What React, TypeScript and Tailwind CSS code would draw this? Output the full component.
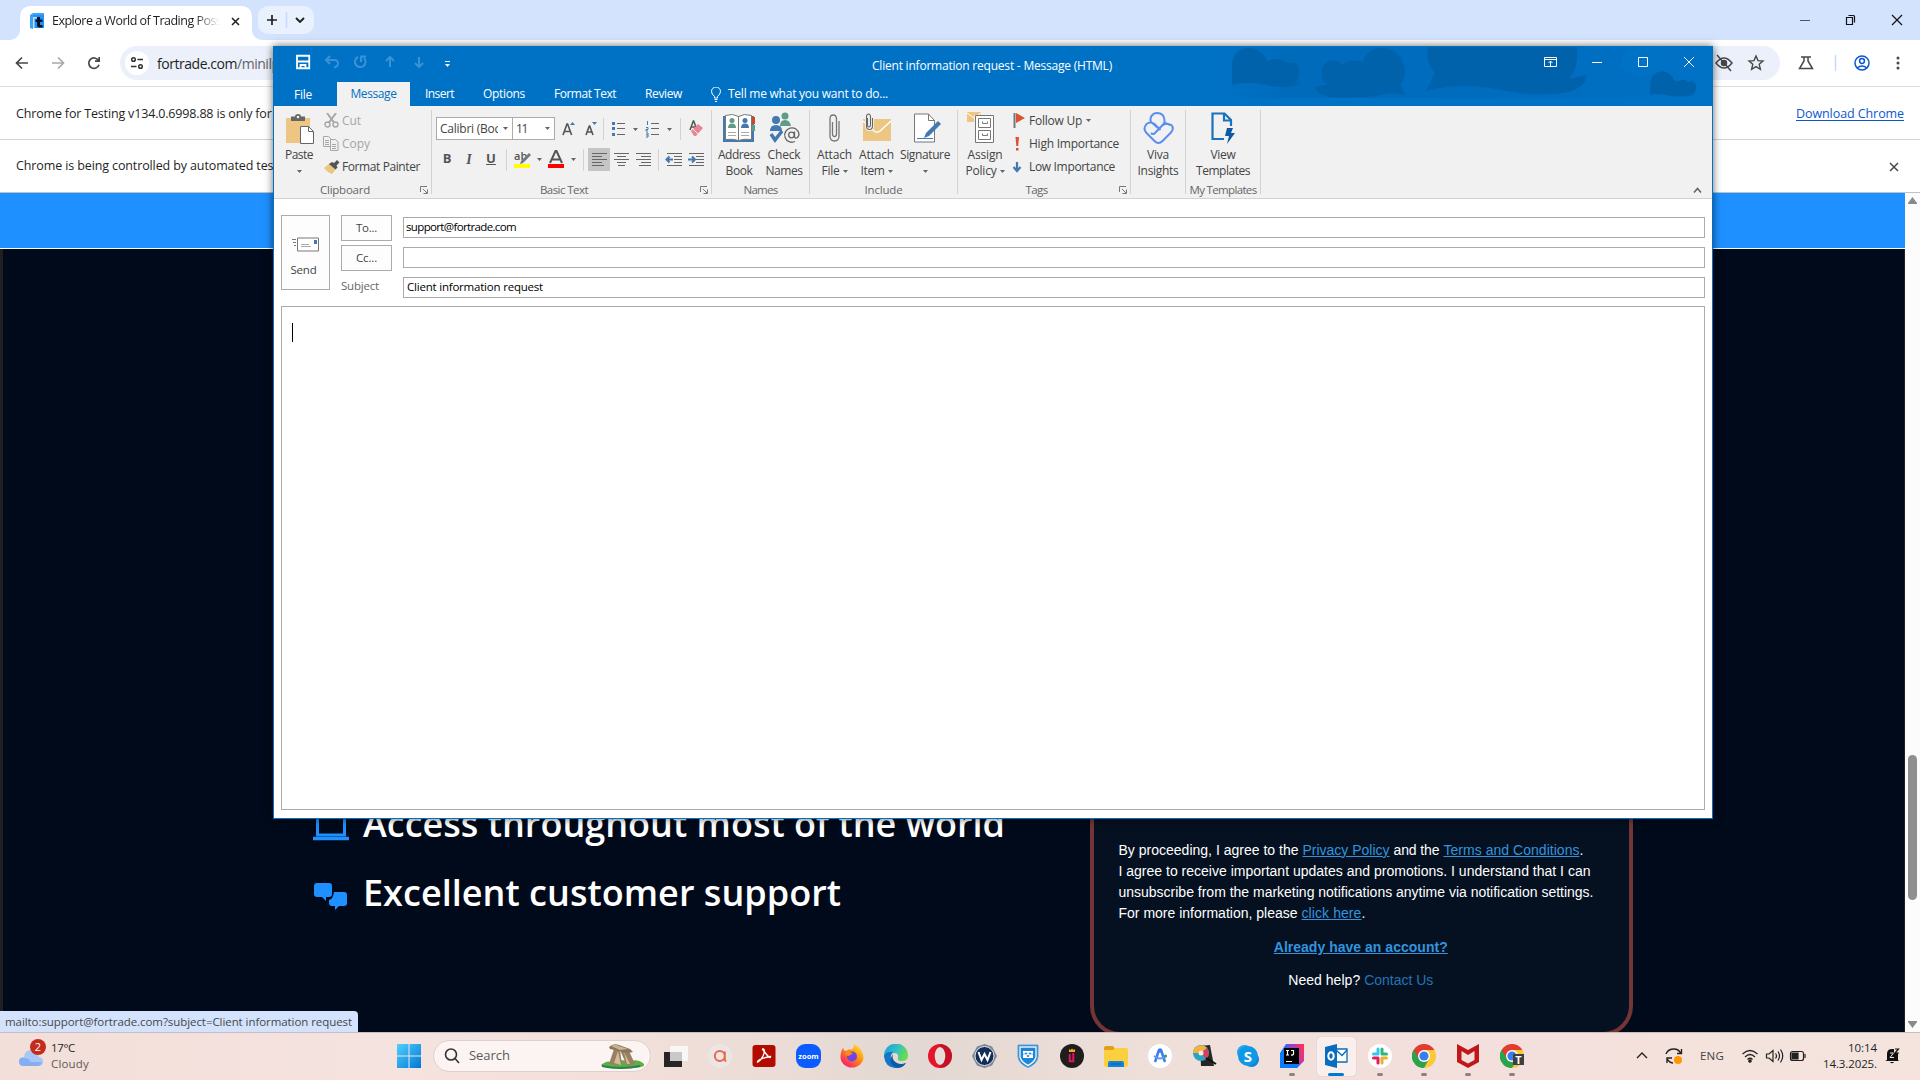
import { useLayoutEffect, useRef, type ReactNode } from 'react';

/** Text on one line whose letter spacing is adjusted so that it fills `w` pixels. */
function Fit({ w, className = '', children }: { w: number; className?: string; children: string }) {
  const ref = useRef<HTMLSpanElement>(null);
  useLayoutEffect(() => {
    const el = ref.current;
    if (!el) return;
    el.style.letterSpacing = '0px';
    const natural = el.getBoundingClientRect().width;
    el.style.letterSpacing = `${(w - natural) / children.length}px`;
  }, [w, children]);
  return (
    <span ref={ref} className={`inline-block shrink-0 whitespace-nowrap ${className}`}>
      {children}
    </span>
  );
}

const Caret = ({ className = 'text-[#666]' }: { className?: string }) => (
  <svg width="5" height="3" viewBox="0 0 5 3" className={`shrink-0 ${className}`}>
    <path d="M0 0h5L2.5 3z" fill="currentColor" />
  </svg>
);

const Launcher = () => (
  <svg width="8" height="8" viewBox="0 0 8 8" className="text-[#777]">
    <path d="M.5 6V.5H7M3 3l4 4M7.5 3.5v4h-4" fill="none" stroke="currentColor" />
  </svg>
);

/* ---------------------------------------------------------------- Chrome */

function TabStrip() {
  return (
    <div className="flex h-10 items-end bg-[#d3e3fd]">
      <div className="ml-2.5 h-2.5 w-2.5 bg-white">
        <div className="h-full w-full rounded-br-[10px] bg-[#d3e3fd]" />
      </div>
      <div className="flex h-[34px] w-[232px] items-center rounded-t-[10px] bg-white pb-1 pl-2.5">
        <svg width="14" height="16" viewBox="0 0 14 16">
          <path d="M2 1h12v14H2z" fill="#1e90ff" />
          <path d="M0 2 3 0h11v2H3v14l-3-1z" fill="#38a5f5" />
          <path d="M3 4h4v1.500H4.500V15H3z" fill="#bfe0ff" />
          <path d="M7 4h3v2.500h2.500V9H10v3h2.500v2.500H9Q7 14 7 12V9H5.500V6.500H7z" fill="#06121f" />
        </svg>
        <div className="ml-2 w-[168px] overflow-hidden text-[12.500px] text-[#1f1f1f] [mask-image:linear-gradient(to_right,#000_85%,transparent)]">
          <Fit w={172}>Explore a World of Trading Possi</Fit>
        </div>
        <svg width="9" height="9" viewBox="0 0 9 9" className="ml-[11px]">
          <path d="m1 1 7 7M8 1 1 8" stroke="#1f1f1f" strokeWidth="1.500" />
        </svg>
      </div>
      <div className="h-2.5 w-2.5 bg-white">
        <div className="h-full w-full rounded-bl-[10px] bg-[#d3e3fd]" />
      </div>
      <div className="-ml-1 mb-1.5 flex h-7 w-14 items-center rounded-[10px] bg-[#e9f0fe]">
        <svg width="56" height="28" viewBox="0 0 56 28" fill="none" stroke="#1f1f1f" strokeWidth="1.700">
          <path d="M14 9v10M9 14h10" />
          <path d="M28.500 6v16" stroke="#c5dafc" strokeWidth="1.500" />
          <path d="m38 12 4 4 4-4" strokeWidth="1.900" />
        </svg>
      </div>
      <svg width="120" height="40" viewBox="0 0 120 40" className="ml-auto" fill="none" stroke="#111">
        <path d="M0 20.500h10" stroke="#555" />
        <path d="M46.500 17.500h6v7h-6zM48.500 15.500h5q1 0 1 1v6" strokeWidth="1.200" />
        <path d="m92 15 10 10M102 15 92 25" strokeWidth="1.200" />
      </svg>
    </div>
  );
}

function Toolbar() {
  return (
    <div className="flex h-[47px] items-center border-b border-[#dcdfe4] bg-white">
      <svg width="120" height="34" viewBox="0 0 120 34" fill="none" stroke="#474747" strokeWidth="1.700">
        <path d="M28 17H17M22 11.500 16.500 17l5.500 5.500" />
        <path d="M52 17h11M58 11.500l5.500 5.500-5.500 5.500" stroke="#a9a9a9" />
        <path d="M98.500 14.500a5.200 5.200 0 1 0 .5 4.200M99.200 11v4.200H95" />
      </svg>
      <div className="flex h-[34px] w-[1660px] items-center rounded-full bg-[#ebf0fa] pl-[5px]">
        <svg width="24" height="24" viewBox="0 0 24 24" fill="none" stroke="#303030" strokeWidth="1.500">
          <circle cx="12" cy="12" r="12" fill="#fff" stroke="none" />
          <circle cx="8.500" cy="8.500" r="1.800" />
          <path d="M12.500 8.500H18M6 15.500h5.500" />
          <circle cx="15.500" cy="15.500" r="1.800" />
        </svg>
        <div className="ml-2 flex text-[14px] text-[#1f1f1f]">
          <Fit w={80}>fortrade.com</Fit>
          <Fit w={69} className="text-[#5f6368]">/minilps/en</Fit>
        </div>
        <svg width="20" height="20" viewBox="0 0 20 20" className="ml-auto" fill="none" stroke="#474747" strokeWidth="1.500">
          <path d="M2 10q8-10 16 0-8 10-16 0z" />
          <circle cx="10" cy="10" r="2.500" fill="#474747" />
          <path d="m3 2 14 16" />
        </svg>
        <svg width="20" height="20" viewBox="0 0 20 20" className="ml-3 mr-3.5" fill="none" stroke="#474747" strokeWidth="1.400">
          <path d="m10 3 2 4.600 5 .4-3.800 3.300 1.200 5L10 13.600l-4.400 2.700 1.200-5L3 8l5-.4z" />
        </svg>
      </div>
      <svg width="140" height="34" viewBox="0 0 140 34" fill="none" stroke="#474747" strokeWidth="1.500">
        <path d="M21 11h10M24 11v4l-4.500 7.500h13L28 15v-4" />
        <path d="M55.500 9v16" stroke="#c5dafc" />
        <g stroke="#0b57d0">
          <circle cx="82" cy="17" r="7" />
          <circle cx="82" cy="15" r="2.400" />
          <path d="M77 22q5-4 10 0" />
        </g>
        <g fill="#474747" stroke="none">
          <circle cx="118" cy="12" r="1.500" />
          <circle cx="118" cy="17" r="1.500" />
          <circle cx="118" cy="22" r="1.500" />
        </g>
      </svg>
    </div>
  );
}

function InfoBars() {
  return (
    <>
      <div className="flex h-[53px] items-center justify-between border-b border-[#d2d2d2] bg-white pl-4 pr-4 pt-0.5 text-[12.500px] text-[#1f1f1f]">
        <Fit w={366}>Chrome for Testing v134.0.6998.88 is only for automated testing.</Fit>
        <Fit w={108} className="text-[#0b57d0] underline underline-offset-2">Download Chrome</Fit>
      </div>
      <div className="flex h-[53px] items-center justify-between border-b border-[#bfc3c8] bg-white pl-4 pr-[21px] pt-px text-[12.500px] text-[#1f1f1f]">
        <Fit w={318}>Chrome is being controlled by automated test software.</Fit>
        <svg width="10" height="10" viewBox="0 0 10 10">
          <path d="m1 1 8 8M9 1 1 9" stroke="#474747" strokeWidth="1.500" />
        </svg>
      </div>
    </>
  );
}

function WebPage() {
  return (
    <div className="flex h-[839px] w-full">
      <div className="flex grow flex-col">
        <div className="h-[56px] border-b border-white bg-[#1e90ff]" />
        <div className="flex grow overflow-hidden border-l-[3px] border-r border-[#202020] bg-[#000a1a]">
          <div className="flex w-[1087px] flex-col pl-[310px] pt-[541px] font-['Open_Sans'] text-[36px] font-semibold text-white">
            <div className="flex h-[69px] items-center">
              <svg width="36" height="30" viewBox="0 0 36 30" className="mt-1" fill="none" stroke="#1e90ff">
                <path d="M4.500 24V3h27v21z" strokeWidth="3" />
                <path d="M0 27.500h36" strokeWidth="3.500" />
              </svg>
              <Fit w={642} className="ml-[14px]">Access throughout most of the world</Fit>
            </div>
            <div className="flex h-[69px] items-center">
              <svg width="36" height="30" viewBox="0 0 36 30" className="mt-2" fill="#1e90ff">
                <path d="M4 1h12q3 0 3 3v8q0 3-3 3h-3v4l-4-4H4q-3 0-3-3V4q0-3 3-3z" />
                <path d="M21 10h10q3 0 3 3v8q0 3-3 3h-5l-4 4v-4h-3q-3 0-3-3v-3q4-1 5-8z" />
              </svg>
              <Fit w={478} className="ml-[14px]">Excellent customer support</Fit>
            </div>
          </div>
          <div className="mt-[500px] flex h-[287px] w-[543px] shrink-0 flex-col rounded-b-[30px] border-4 border-t-0 border-[#733535] bg-[#051120] pl-[24.500px] pt-[91px] font-['Liberation_Sans'] text-[14px] leading-[21px] text-white">
            <div className="flex">
              <Fit w={180}>By proceeding, I agree to the</Fit>
              <Fit w={87} className="ml-1 text-[#3294df] underline">Privacy Policy</Fit>
              <Fit w={46} className="ml-1">and the</Fit>
              <Fit w={136} className="ml-1 text-[#3294df] underline">Terms and Conditions</Fit>
              <span>.</span>
            </div>
            <Fit w={472} className="self-start">I agree to receive important updates and promotions. I understand that I can</Fit>
            <Fit w={475} className="self-start">unsubscribe from the marketing notifications anytime via notification settings.</Fit>
            <div className="flex">
              <Fit w={179}>For more information, please</Fit>
              <Fit w={60} className="ml-1 text-[#3294df] underline">click here</Fit>
              <span>.</span>
            </div>
            <div className="mt-[13px] flex justify-center pr-[26px] font-bold text-[#3294df]">
              <Fit w={174} className="underline">Already have an account?</Fit>
            </div>
            <div className="mt-3 flex justify-center gap-1 pr-[26px]">
              <Fit w={72}>Need help?</Fit>
              <Fit w={69} className="text-[#2474b5]">Contact Us</Fit>
            </div>
          </div>
        </div>
      </div>
      <div className="flex w-[15px] flex-col items-center bg-[#fcfcfc]">
        <svg width="9" height="7" viewBox="0 0 9 7" className="mt-1">
          <path d="M4.500 0 9 6v1H0V6z" fill="#8a8a8a" />
        </svg>
        <div className="mt-[551px] h-[145px] w-[9px] rounded-full bg-[#8f8f8f]" />
        <svg width="9" height="7" viewBox="0 0 9 7" className="mb-1 mt-auto">
          <path d="M4.500 7 9 1V0H0v1z" fill="#8a8a8a" />
        </svg>
      </div>
    </div>
  );
}

/* --------------------------------------------------------------- Outlook */

function TitleBar() {
  return (
    <div className="relative h-9">
      <svg width="497" height="52" viewBox="0 0 497 52" className="absolute right-0 top-[1px]">
        <defs>
          <linearGradient id="fade" x1="0" x2="1">
            <stop offset="0" stopColor="#006bbb" stopOpacity="0" />
            <stop offset=".15" stopColor="#006bbb" />
            <stop offset=".7" stopColor="#006dc0" />
            <stop offset="1" stopColor="#0072c6" />
          </linearGradient>
        </defs>
        <path d="M0 0h497v51H0z" fill="url(#fade)" />
        <path d="M405 20q2-20 16-20h20q14 8 14 28H418z" fill="#0072c6" />
        <g fill="#0062ab">
          <path d="M17 38V17Q19 2 33 1q14 0 19 13 14-5 20 2 14-2 12 10 0 10-8 11l10-2q-6 7-30 4-22-6-39-1z" />
          <path d="M107 30q-2-16 12-17 6 1 8 5 8-7 21-3Q152 1 168 1q20 2 22 23 0 9-5 14l6 10q-10-2-16-2-20 6-60 4-16-4-14-10l12-3q-6-3-6-7z" />
          <path d="M213 0h149q2 20-8 32l18-4q-2 18-36 19-24 2-60-6-35-5-65 3 6-12 9-18-10-10-7-26z" />
          <path d="M435 48q0-18 3-20 12-9 20 3 1 4 6 3 6-3 9 1 8-3 8 5 0 5-4 8h3q-15 3-29 0-10-2-16 0z" />
        </g>
      </svg>
      <div className="relative flex h-full items-center">
        <svg width="200" height="36" viewBox="0 0 200 36" fill="none" stroke="#fff" strokeWidth="1.500">
          <path d="M23 9.750h12.250v12.500H23zM24 15.500h11M26.500 22v-3h5v3" strokeWidth="1.800" />
          <g stroke="#3a92d6" strokeWidth="2">
            <path d="M56 10l-4 4 4 4M52 14h8q4 0 4 3.500 0 3-4 4" />
            <path d="M84 11a5.300 5.300 0 1 0 6 1M87 16v-5.500h5" />
            <path d="M116 21V11M112 15l4-4 4 4" />
            <path d="M145 11v10M141 17l4 4 4-4" />
          </g>
          <path d="M171 15.500h5" strokeWidth="1" />
          <path d="M171 18h5l-2.500 3z" fill="#fff" stroke="none" />
        </svg>
        <div className="flex w-[1036px] justify-center pt-1 text-[12px] text-white">
          <Fit w={240}>Client information request - Message (HTML)</Fit>
        </div>
        <svg width="200" height="36" viewBox="0 0 200 36" fill="none" stroke="#fff" className="ml-px">
          <path d="M33.500 11.500h12v9h-12zM33.500 13.500h12M39.500 20v-5M37.500 17l2-2 2 2" />
          <path d="M81 16.500h10" />
          <path d="M127.500 11.500h9v9h-9z" />
          <path d="m173 11 10 10M183 11l-10 10" />
        </svg>
      </div>
    </div>
  );
}

function RibbonTabs() {
  return (
    <div className="relative flex h-6 items-center text-[12px] text-white">
      <Fit w={18} className="ml-5 mt-0.5">File</Fit>
      <div className="ml-[25px] flex h-full w-[73px] items-center justify-center bg-[#f1f1f1] text-[#0072c6]">
        <Fit w={46}>Message</Fit>
      </div>
      <Fit w={29} className="ml-[15px]">Insert</Fit>
      <Fit w={42} className="ml-[29px]">Options</Fit>
      <Fit w={62} className="ml-[29px]">Format Text</Fit>
      <Fit w={37} className="ml-[29px]">Review</Fit>
      <svg width="10" height="15" viewBox="0 0 10 15" className="ml-[29px]" fill="none" stroke="#fff">
        <path d="M3.500 11V9.500Q.5 7 .5 4.500a4.500 4.500 0 0 1 9 0Q9.500 7 6.500 9.500V11zM3.500 12.500h3M4 14.500h2" />
      </svg>
      <Fit w={160} className="ml-[7px]">Tell me what you want to do...</Fit>
    </div>
  );
}

function Group({ name, nameWidth, className, launcher, children }: {
  name?: string; nameWidth?: number; className: string; launcher?: boolean; children: ReactNode;
}) {
  return (
    <div className={`flex h-[84px] flex-col border-r border-[#d2d2d2] ${className}`}>
      <div className="-mt-px flex h-[75px] shrink-0">{children}</div>
      <div className="flex h-3 shrink-0 items-center text-[11.500px] text-[#666]">
        <div className={`flex grow justify-center ${launcher ? 'pr-1' : ''}`}>
          {name && nameWidth ? <Fit w={nameWidth}>{name}</Fit> : null}
        </div>
        {launcher ? <div className="pr-[3px]"><Launcher /></div> : null}
      </div>
    </div>
  );
}

function BigButton({ icon, lines, widths, className, caret }: {
  icon: ReactNode; lines: string[]; widths: number[]; className: string; caret?: boolean;
}) {
  return (
    <div className={`flex shrink-0 flex-col items-center text-[12px] leading-4 text-[#444] ${className}`}>
      <div className="flex h-9 items-center justify-center pt-px">{icon}</div>
      <Fit w={widths[0]} className="mt-0.5">{lines[0]}</Fit>
      <div className="flex h-4 items-center gap-[3px]">
        {lines[1] ? <Fit w={widths[1]}>{lines[1]}</Fit> : null}
        {caret ? <Caret /> : null}
      </div>
    </div>
  );
}

function SmallRow({ icon, text, w, className = 'w-auto', color = 'text-[#444]', caret }: {
  icon: ReactNode; text: string; w: number; className?: string; color?: string; caret?: boolean;
}) {
  return (
    <div className={`flex h-[23px] items-center text-[12px] ${color} ${className}`}>
      <div className="flex w-4 shrink-0 justify-start">{icon}</div>
      <Fit w={w}>{text}</Fit>
      {caret ? <div className="pl-1"><Caret /></div> : null}
    </div>
  );
}

const PasteIcon = () => (
  <svg width="30" height="32" viewBox="0 0 30 32" className="translate-x-px translate-y-0.5">
    <path d="M1 4h24v25H1z" fill="#ecc682" />
    <path d="M6 2.500h4Q10 0 13 0t3 2.500h4V7H6z" fill="#666" />
    <circle cx="13" cy="3" r="1.300" fill="#f1f1f1" />
    <path d="M15.500 12.500h8l5 5v12h-13z" fill="#fff" stroke="#666" />
    <path d="M23.500 12.500v5h5" fill="none" stroke="#666" />
  </svg>
);
const CutIcon = () => (
  <svg width="15" height="15" viewBox="0 0 15 15" fill="none" stroke="#a6a6a6">
    <path d="M3 0l7 9.500M12 0 5 9.500" strokeWidth="2" />
    <circle cx="3.500" cy="11.500" r="2.500" strokeWidth="1.400" />
    <circle cx="11.500" cy="11.500" r="2.500" strokeWidth="1.400" />
  </svg>
);
const CopyIcon = () => (
  <svg width="16" height="15" viewBox="0 0 16 15" fill="#f1f1f1" stroke="#a6a6a6" className="-ml-px">
    <path d="M.5.500h5l2 2v8h-7z" />
    <path d="M2 4.500h4M2 6.500h4M2 8.500h4" />
    <path d="M7.500 3.500h5l2.500 2.500v8.500H7.500z" />
    <path d="M9 8.500h4M9 10.500h4M9 12.500h4" />
  </svg>
);
const PainterIcon = () => (
  <svg width="16" height="14" viewBox="0 0 16 14">
    <path d="m0 8 6-5 6 6-4 5Q4 13 0 8z" fill="#ecc682" />
    <path d="m5 4 3-2 2 1 3-3 2.500 2.500-3 3 1 2-2 2z" fill="#555" />
  </svg>
);
const AddressBookIcon = () => (
  <svg width="32" height="30" viewBox="0 0 32 30">
    <path d="M0 3h31v26H0z" fill="#4378b0" />
    <path d="M29 4h3v7h-3z" fill="#d24726" />
    <path d="M29 12h3v6h-3z" fill="#5e9c85" />
    <path d="M2.500 2.500Q10 0 15.500 3.500 21 0 28.500 2.500v24q-8-1-13 1-5-2-13-1z" fill="#fff" stroke="#777" />
    <path d="M15.500 3.500v24" stroke="#777" />
    <circle cx="9" cy="7.500" r="2.500" fill="#5e9c85" />
    <path d="M5 15q0-4.500 4-4.500t4 4.500z" fill="#5e9c85" />
    <circle cx="22" cy="7.500" r="2.500" fill="#4378b0" />
    <path d="M18 15q0-4.500 4-4.500t4 4.500z" fill="#4378b0" />
    <path d="M5 19.500h8M5 22.500h8M18 19.500h8M18 22.500h8" stroke="#aaa" />
  </svg>
);
const CheckNamesIcon = () => (
  <svg width="31" height="32" viewBox="0 0 31 32">
    <circle cx="16" cy="4" r="3.500" fill="#5e9c85" />
    <path d="M11 14q0-6 5-6t6 6z" fill="#5e9c85" />
    <circle cx="7" cy="8" r="4" fill="#4378b0" />
    <path d="M1 19q0-6 6-6t6 6z" fill="#4378b0" />
    <path d="m2 22 4 6 7-9" fill="none" stroke="#4378b0" strokeWidth="3.500" />
    <g fill="none" stroke="#666" strokeWidth="1.300">
      <circle cx="22.500" cy="23" r="2.800" />
      <path d="M25.500 19.500v5q.5 2 2 1.500 2.500-1 2.500-4a7.200 7.200 0 1 0-4 7.500" />
    </g>
  </svg>
);
const Clip = () => (
  <svg width="11" height="28" viewBox="0 0 11 28" fill="none" stroke="#777" strokeWidth="1.300">
    <path d="M3.500 8v12q0 2.500 2 2.500t2-2.500V5q0-4-3.300-4T1 5v17q0 5 4.500 5t4.500-5V7" />
  </svg>
);
const AttachItemIcon = () => (
  <svg width="28" height="30" viewBox="0 0 28 30">
    <path d="M0 6h28v22H0z" fill="#ecc682" />
    <path d="m0 8 11 10q3 2.500 6 0L28 8" fill="none" stroke="#fff" strokeWidth="1.500" />
    <path d="M4.500 5v7q0 2 1.500 2t1.500-2V4q0-3-2-3t-2 3v9q0 3.500 3 3.500T9.500 13V5" fill="none" stroke="#f1f1f1" strokeWidth="3" />
    <path d="M4.500 5v7q0 2 1.500 2t1.500-2V4q0-3-2-3t-2 3v9q0 3.500 3 3.500T9.500 13V5" fill="none" stroke="#666" strokeWidth="1.100" />
  </svg>
);
const SignatureIcon = () => (
  <svg width="28" height="30" viewBox="0 0 28 30" className="translate-x-0.5">
    <path d="M1.500 1h14l6 6.500V29h-20z" fill="#fff" stroke="#777" />
    <path d="M15.500 1v6.500h6" fill="none" stroke="#777" />
    <path d="M25 8l3 3-12 12-5 2 2-5z" fill="#4378b0" />
    <path d="M4 25.500h16" stroke="#4378b0" />
  </svg>
);
const PolicyIcon = () => (
  <svg width="28" height="32" viewBox="0 0 28 32" className="-ml-2">
    <path d="M0 0h14v10H0z" fill="#ecc682" />
    <path d="m0 1 7 5 7-5" fill="none" stroke="#fff" />
    <path d="M7 3h21v29H7z" fill="#f1f1f1" />
    <g fill="#fff" stroke="#777">
      <path d="M8.500 3.500h18v27h-18z" />
      <path d="M11.500 6.500h12v9h-12zM11.500 18.500h12v9h-12z" />
      <path d="M15.500 9.500v2h5v-2M15.500 21.500v2h5v-2" fill="none" />
    </g>
  </svg>
);
const VivaIcon = () => (
  <svg width="31" height="32" viewBox="0 0 31 32" fill="none" stroke="#5b8def" strokeWidth="2">
    <path d="M15 16 8 10a6.500 6.500 0 0 1 6-9q7 0 7.500 7v3l7 2q3 4-1 8l-8 8q-4 4-8 0l-8-8q-4-4 0-9 4-3 8 0l6 6" />
    <path d="M21.500 11 12 21q-2 2-4 0M27 13q-5-3-8 1" />
  </svg>
);
const TemplateIcon = () => (
  <svg width="25" height="32" viewBox="0 0 25 32" fill="none" stroke="#1b73bb" strokeWidth="2.200">
    <path d="M13 27H1.500V1.500h12l6.500 6.500v6M13 2v6.500h7" />
    <path d="M16 16h6l-2 5h4l-8 11 2-8h-4z" fill="#0b5aa2" stroke="none" />
  </svg>
);

const Bars = ({ d }: { d: string }) => (
  <svg width="15" height="13" viewBox="0 0 15 13" fill="none" stroke="#666">
    <path d={d} />
  </svg>
);
const Rule = () => <div className="h-[22px] w-px shrink-0 bg-[#d2d2d2]" />;

function BasicText() {
  return (
    <Group name="Basic Text" nameWidth={48} className="w-[280px]" launcher>
      <div className="flex flex-col pl-[4px] text-[#555]">
        <div className="mt-2 flex h-[23px] items-center">
          <div className="flex h-full w-[77px] items-center justify-between border border-[#ababab] bg-white pl-[3px] pr-1 text-[12px] text-[#444]">
            <div className="w-[58px] overflow-hidden"><Fit w={60}>Calibri (Boc</Fit></div>
            <Caret />
          </div>
          <div className="-ml-px flex h-full w-[43px] items-center justify-between border border-[#ababab] bg-white pl-[3px] pr-1 text-[12px] text-[#444]">
            <Fit w={11}>11</Fit>
            <Caret />
          </div>
          <svg width="48" height="22" viewBox="0 0 48 22">
            <path d="m8 17 4-11h.6l4 11M9.500 13.500h6" fill="none" stroke="#555" strokeWidth="1.600" />
            <path d="m15 7 2.500-3L20 7z" fill="#4378b0" />
            <path d="m31 17 3.300-9h.4l3.300 9M32.500 14h4.500" fill="none" stroke="#555" strokeWidth="1.600" />
            <path d="M37 4h5l-2.500 3z" fill="#4378b0" />
          </svg>
          <Rule />
          <svg width="76" height="22" viewBox="0 0 76 22" fill="none" stroke="#666">
            <path d="M13 5.500h8M13 10.500h8M13 16.500h8M47 5.500h8M47 10.500h8M47 16.500h8" />
            <path d="M8 4h3v3H8zM8 9h3v3H8zM8 15h3v3H8z" fill="#4378b0" stroke="none" />
            <path d="M43.500 3v4M42 9.500h2v2h-2v1.500h2M42 15h2v4h-2M42 17h2" stroke="#4378b0" />
            <path d="M29 10h5l-2.500 3zM63 10h5l-2.500 3z" fill="#666" stroke="none" />
          </svg>
          <Rule />
          <svg width="28" height="22" viewBox="0 0 28 22">
            <path d="m9 12 3.300-9h.4l3 8M10.500 9h4.500" fill="none" stroke="#555" strokeWidth="1.500" />
            <path d="m10 13 7-7 5 4-7 8h-2z" fill="#e88594" />
            <path d="m12 11 5 5" stroke="#f1f1f1" />
          </svg>
        </div>
        <div className="mt-2 flex h-[23px] items-center">
          <div className="flex w-[70px] text-center text-[13px] font-bold">
            <span className="w-[22px]">B</span>
            <span className="w-[22px] font-['Liberation_Serif'] text-[14px] italic">I</span>
            <span className="w-[22px] underline">U</span>
          </div>
          <Rule />
          <svg width="76" height="24" viewBox="0 0 76 24">
            <text x="7" y="12" fontSize="11" fontWeight="600" fill="#555" fontFamily="Open Sans">ab</text>
            <path d="m22 5 2 2-8 8-3 1 1-3z" fill="#777" />
            <path d="M7 16h16v4H7z" fill="#ff0" />
            <path d="M43 15 48.500 3h1L55 15M45 11.500h8" fill="none" stroke="#555" strokeWidth="2" />
            <path d="M41 16h16v4H41z" fill="red" />
            <path d="M30 10h5l-2.500 3zM64 10h5l-2.500 3z" fill="#666" />
          </svg>
          <Rule />
          <div className="ml-[4px] flex h-[23px] w-[22px] items-center justify-center bg-[#c5c5c5]">
            <Bars d="M0 .5h15M0 3.500h10M0 6.500h15M0 9.500h10M0 12.500h12" />
          </div>
          <div className="flex w-[22px] justify-center"><Bars d="M0 .5h15M3 3.500h9M0 6.500h15M3 9.500h9M4 12.500h7" /></div>
          <div className="flex w-[22px] justify-center"><Bars d="M0 .5h15M5 3.500h10M0 6.500h15M5 9.500h10M3 12.500h12" /></div>
          <div className="w-1" />
          <Rule />
          <svg width="48" height="22" viewBox="0 0 48 22" fill="none" stroke="#666">
            <path d="M8 4.500h15M15 7.500h8M15 10.500h8M15 13.500h8M8 16.500h15M30 4.500h15M37 7.500h8M37 10.500h8M37 13.500h8M30 16.500h15" />
            <path d="M14 10.500H8M10.500 7.500l-3 3 3 3M29 10.500h6M33 7.500l3 3-3 3" stroke="#4378b0" strokeWidth="2" />
          </svg>
        </div>
      </div>
    </Group>
  );
}

function Ribbon() {
  return (
    <div className="flex h-[93px] items-start border-b border-[#d2d2d2] bg-[#f1f1f1] pt-1">
      <Group name="Clipboard" nameWidth={50} className="w-[158px]" launcher>
        <BigButton icon={<PasteIcon />} lines={['Paste']} widths={[28]} className="w-[50px]" caret />
        <div className="flex flex-col">
          <SmallRow icon={<CutIcon />} text="Cut" w={19} className="gap-0.5" color="text-[#a6a6a6]" />
          <SmallRow icon={<CopyIcon />} text="Copy" w={28} className="gap-0.5" color="text-[#a6a6a6]" />
          <SmallRow icon={<PainterIcon />} text="Format Painter" w={78} className="gap-0.5" />
        </div>
      </Group>
      <BasicText />
      <Group name="Names" nameWidth={34} className="w-[98px]">
        <BigButton icon={<AddressBookIcon />} lines={['Address', 'Book']} widths={[42, 27]} className="ml-px w-[52px]" />
        <BigButton icon={<CheckNamesIcon />} lines={['Check', 'Names']} widths={[33, 37]} className="-ml-px w-10" />
      </Group>
      <Group name="Include" nameWidth={38} className="w-[148px]">
        <BigButton icon={<Clip />} lines={['Attach', 'File']} widths={[35, 18]} className="ml-1 w-[41px]" caret />
        <BigButton icon={<AttachItemIcon />} lines={['Attach', 'Item']} widths={[35, 24]} className="w-[43px]" caret />
        <BigButton icon={<SignatureIcon />} lines={['Signature']} widths={[50]} className="w-[54px]" caret />
      </Group>
      <Group name="Tags" nameWidth={22} className="w-[173px]" launcher>
        <BigButton icon={<PolicyIcon />} lines={['Assign', 'Policy']} widths={[35, 31]} className="ml-px w-[52px]" caret />
        <div className="ml-[2px] flex flex-col">
          <SmallRow
            icon={<svg width="12" height="15" viewBox="0 0 12 15"><path d="M.5 0h2v15h-2z" fill="#777" /><path d="m3 0 9 5-9 5z" fill="#d9532c" /></svg>}
            text="Follow Up" w={53} caret
          />
          <SmallRow
            icon={<svg width="12" height="14" viewBox="0 0 12 14" className="-ml-px"><path d="M3.500 0h3.500l-.8 9H4.300zM4 11h2.500v2.500H4z" fill="#d9532c" /></svg>}
            text="High Importance" w={90}
          />
          <SmallRow
            icon={<svg width="12" height="12" viewBox="0 0 12 12" className="-ml-px"><path d="M5 1v9M1.500 6 5 10l3.500-4" fill="none" stroke="#4378b0" strokeWidth="2.200" /></svg>}
            text="Low Importance" w={86}
          />
        </div>
      </Group>
      <Group className="w-[55px]">
        <BigButton icon={<VivaIcon />} lines={['Viva', 'Insights']} widths={[22, 41]} className="w-[54px]" />
      </Group>
      <Group name="My Templates" nameWidth={67} className="w-[75px]">
        <BigButton icon={<TemplateIcon />} lines={['View', 'Templates']} widths={[25, 54]} className="w-[74px]" />
      </Group>
      <svg width="9" height="6" viewBox="0 0 9 6" className="ml-auto mr-2.5 mt-[77px]">
        <path d="m1 5.500 3.500-4 3.500 4" fill="none" stroke="#666" strokeWidth="1.600" />
      </svg>
    </div>
  );
}

function Compose() {
  return (
    <div className="flex grow flex-col bg-white pb-2 pl-[7px] pr-[7px] pt-4 text-[11.500px] text-black">
      <div className="flex">
        <div className="flex h-[75px] w-[49px] shrink-0 flex-col items-center border border-[#ababab] bg-[#fdfdfd] pt-[21px] text-[#444]">
          <svg width="28" height="15" viewBox="0 0 28 15" fill="none" stroke="#777">
            <path d="M5.500 1h21v13h-21z" fill="#fff" />
            <path d="M9 9.500h10M9 7.500h8" stroke="#aaa" />
            <path d="M22 3h3v4h-3z" fill="#4378b0" stroke="none" />
            <path d="M0 2.500h4M1 5.500h3M2 8.500h2" />
          </svg>
          <Fit w={26} className="mr-1 mt-[9px]">Send</Fit>
        </div>
        <div className="ml-[11px] flex w-[51px] shrink-0 flex-col text-[#444]">
          <div className="flex h-[26px] items-center justify-center border border-[#ababab] bg-[#fdfdfd]"><Fit w={21}>To...</Fit></div>
          <div className="mt-1 flex h-[26px] items-center justify-center border border-[#ababab] bg-[#fdfdfd]"><Fit w={21}>Cc...</Fit></div>
          <Fit w={38} className="mt-1.5 self-start text-[#666]">Subject</Fit>
        </div>
        <div className="ml-[11px] mt-0.5 flex grow flex-col gap-[9px]">
          <div className="flex h-[21px] items-center border border-[#ababab] pb-0.5 pl-0.5"><Fit w={110}>support@fortrade.com</Fit></div>
          <div className="h-[21px] border border-[#ababab]" />
          <div className="flex h-[21px] items-center border border-[#ababab] pb-0.5 pl-[3px]"><Fit w={136}>Client information request</Fit></div>
        </div>
      </div>
      <div className="mt-2 grow border border-[#ababab] pl-2.5 pt-4">
        <div className="h-[19px] w-px bg-black" />
      </div>
    </div>
  );
}

function OutlookWindow() {
  return (
    <div className="absolute left-[273px] top-[46px] flex h-[773px] w-[1440px] flex-col border-x border-b border-[#0072c6] bg-[#0072c6] shadow-[0_0_8px_rgba(0,0,0,0.6)]">
      <TitleBar />
      <RibbonTabs />
      <Ribbon />
      <Compose />
    </div>
  );
}

/* --------------------------------------------------------------- Taskbar */

const ChromeLogo = ({ badge }: { badge?: boolean }) => (
  <svg width="24" height="24" viewBox="0 0 24 24">
    <path d="M12 12 1.600 6A12 12 0 0 1 22.400 6z" fill="#e33b2e" />
    <path d="M12 12 1.600 6A12 12 0 0 0 12 24z" fill="#2ba24c" />
    <path d="M12 12l10.400-6A12 12 0 0 1 12 24z" fill="#fcc934" />
    <path d="M12 6h10.400L17 15z" fill="#fcc934" />
    <path d="M12 6H1.600L7 15z" fill="#e33b2e" />
    <path d="M1.600 6 7 15l5 3v6A12 12 0 0 1 1.600 6z" fill="#2ba24c" />
    <path d="m17 15-5 9-2-5z" fill="#2ba24c" />
    <circle cx="12" cy="12" r="6" fill="#fff" />
    <circle cx="12" cy="12" r="4.600" fill="#3b7ded" />
    {badge ? (
      <>
        <path d="M13 10h11v11H13z" fill="#3c4043" />
        <text x="18.500" y="19.500" fontSize="11" fontWeight="700" textAnchor="middle" fill="#fff" fontFamily="Open Sans">T</text>
      </>
    ) : null}
  </svg>
);

const apps: { icon: ReactNode; state?: 'running' | 'active' }[] = [
  { icon: (
    <svg width="24" height="24" viewBox="0 0 24 24">
      <path d="M0 8h18v15H0z" fill="#262626" />
      <path d="M6 2h18v15H6z" fill="#fafafa" opacity=".85" />
      <path d="M6 8h12v9H6z" fill="#c9c9c9" />
    </svg>
  ) },
  { icon: (
    <svg width="24" height="24" viewBox="0 0 24 24">
      <circle cx="12" cy="12" r="12" fill="#ebe6e4" />
      <path d="M16.800 7.500V15q0 2 1.500 2M16.800 12a5 5 0 1 1-10 0 5 5 0 1 1 10 0" fill="none" stroke="#e8694a" strokeWidth="2" />
    </svg>
  ) },
  { icon: (
    <svg width="24" height="24" viewBox="0 0 24 24">
      <rect x=".5" y="1" width="23" height="22" rx="3" fill="#b30b00" />
      <path d="M11.500 5q2 1.500-.5 7-3 5.500-5.500 6 0-3 13-5.500 0 3.500-7-6-2-2 0-1.500z" fill="none" stroke="#fff" strokeWidth="1.400" />
    </svg>
  ) },
  { icon: (
    <svg width="25" height="24" viewBox="0 0 25 24">
      <rect width="25" height="24" rx="9" fill="#0b5cff" />
      <text x="12.500" y="14.500" fontSize="7.500" fontWeight="700" textAnchor="middle" fill="#fff" fontFamily="Open Sans">zoom</text>
    </svg>
  ) },
  { icon: (
    <svg width="24" height="24" viewBox="0 0 24 24">
      <defs><linearGradient id="ff" x1="1" y1="0" x2=".2" y2="1"><stop offset="0" stopColor="#fff44f" /><stop offset=".45" stopColor="#ff980e" /><stop offset="1" stopColor="#f5156c" /></linearGradient></defs>
      <path d="M3 4q1 2 2 3l3-1q2-2 3 0 3-1 3-6 9 5 9.500 13A11.500 10.500 0 0 1 .5 13Q.5 7 3 4z" fill="url(#ff)" />
      <circle cx="12" cy="12.500" r="5" fill="#7542e5" />
      <path d="M5 9q4-3 7 0l1 1q-3 0-4 2-3 0-4-3z" fill="#ff8a16" />
    </svg>
  ) },
  { icon: (
    <svg width="24" height="24" viewBox="0 0 24 24">
      <defs><linearGradient id="edge" x1="0" y1="0" x2="1" y2=".4"><stop offset="0" stopColor="#1b9de2" /><stop offset=".6" stopColor="#35c1c0" /><stop offset="1" stopColor="#66dc50" /></linearGradient></defs>
      <path d="M0 12A12 12 0 0 1 24 11q0 6-6 6-5 0-4-3 1-5-4-5-5 0-6 6-4-1-4-3z" fill="url(#edge)" />
      <path d="M0 12q2-5 9-4-4 4-1 9 5 6 14 2-4 6-11 5Q1 23 0 12z" fill="#1277c9" />
      <path d="M9 10q-2 6 4 9 4 2 9 0-5 6-11 4-8-5-2-13z" fill="#0c59a4" />
    </svg>
  ) },
  { icon: (
    <svg width="24" height="24" viewBox="0 0 24 24">
      <ellipse cx="12" cy="12" rx="12" ry="12" fill="#e5142c" />
      <path d="M12 0a12 12 0 0 1 0 24z" fill="#a8101f" opacity=".55" />
      <ellipse cx="12" cy="12" rx="5.300" ry="9" fill="#e6dcd9" />
    </svg>
  ) },
  { icon: (
    <svg width="25" height="24" viewBox="0 0 25 24">
      <path d="M12.500 0 20 2.500l5 9.500-5 9.500-7.500 2.500L5 21.500 0 12l5-9.500z" fill="#7d8794" />
      <circle cx="12.500" cy="12" r="9.500" fill="#142e56" stroke="#dfe5ea" />
      <path d="m6.500 8 3 8 3-6 3 6 3-8" fill="none" stroke="#fff" strokeWidth="2" />
    </svg>
  ) },
  { icon: (
    <svg width="22" height="24" viewBox="0 0 22 24">
      <path d="M1 1h20v12q-1 7-10 10.500Q2 20 1 13z" fill="#1a7fd0" stroke="#62a6da" />
      <path d="M3 3h16v10q-1 5-8 8.500Q4 18 3 13z" fill="#1f86d4" stroke="#e6f2fa" strokeWidth="1.400" />
      <path d="M6 7h10v7H6z" fill="#fff" />
      <path d="M8 9h2v1H8zM12 9h2v1h-2zM10 11.500h2v1h-2zM6 10.300h1.500M14.500 10.300H16" fill="#1f86d4" stroke="#1f86d4" strokeWidth=".6" />
    </svg>
  ) },
  { icon: (
    <svg width="24" height="24" viewBox="0 0 24 24">
      <circle cx="12" cy="12" r="12" fill="#1e1e1e" />
      <path d="M9.700 10v7.300h3.600V9" fill="none" stroke="#e4125b" strokeWidth="2" />
      <path d="M9 5l1.500 1L12 4.500 13.500 6 15 5v3H9z" fill="#f5a623" />
    </svg>
  ) },
  { icon: (
    <svg width="24" height="22" viewBox="0 0 24 22">
      <path d="M0 3q0-2 2-2h7l2 3-2 3H0z" fill="#e0a018" />
      <path d="M0 5h9l2-2h11q2 0 2 2v15q0 2-2 2H2q-2 0-2-2z" fill="#fccf3e" />
      <path d="M4 18q0-2 2-2h12q2 0 2 2v4H4z" fill="#1283d8" />
      <path d="M7 19h10" stroke="#0b5fa8" />
    </svg>
  ) },
  { icon: (
    <svg width="24" height="24" viewBox="0 0 24 24">
      <circle cx="12" cy="12" r="12" fill="#fff" />
      <path d="m11 6-4 12M13 6l4 12" stroke="#3b7ded" strokeWidth="2.500" />
      <path d="M6 12q6 5 12 0" fill="none" stroke="#5e97f6" strokeWidth="1.800" />
      <circle cx="12" cy="6.500" r="2.200" fill="#3b7ded" />
      <circle cx="17.500" cy="12" r="1.500" fill="#2ba24c" />
    </svg>
  ) },
  { icon: (
    <svg width="25" height="24" viewBox="0 0 25 24">
      <path d="m8 2 10-1 4 21H9z" fill="#262626" />
      <circle cx="9" cy="9" r="8" fill="#29a5c4" />
      <path d="M1 9a8 8 0 0 1 14-5L9 9z" fill="#f3b23c" />
      <path d="M15 4q4 6-1 11L9 9z" fill="#d6415a" />
      <circle cx="9" cy="9" r="2.500" fill="#f5e9e2" />
      <path d="m14 14 10 6" stroke="#111" strokeWidth="2" />
    </svg>
  ) },
  { icon: (
    <svg width="24" height="24" viewBox="0 0 24 24">
      <circle cx="8.500" cy="8.500" r="7.500" fill="#17a9ee" />
      <circle cx="15.500" cy="15.500" r="7.500" fill="#0a84d8" />
      <circle cx="12" cy="12" r="10" fill="#0f98e6" />
      <text x="12" y="17.500" fontSize="15" fontWeight="700" textAnchor="middle" fill="#fff" fontFamily="Open Sans">S</text>
    </svg>
  ) },
  { state: 'running', icon: (
    <svg width="24" height="24" viewBox="0 0 24 24">
      <defs><linearGradient id="ij" x1="0" y1=".6" x2="1" y2=".3"><stop offset=".2" stopColor="#087cfa" /><stop offset=".6" stopColor="#9a3fd0" /><stop offset="1" stopColor="#fe315d" /></linearGradient></defs>
      <path d="M6 0h18v17l-7 7H0V9z" fill="url(#ij)" />
      <path d="M0 9v15h17l3-4z" fill="#087cfa" />
      <path d="M4 4h15v16H4z" fill="#000" />
      <path d="M6 6.500h3M7.500 6.500v4.500M6 11h3M11 6.500h2.500V10q0 1.200-2.500 1M6 17.500h6" fill="none" stroke="#fff" strokeWidth="1.200" />
    </svg>
  ) },
  { state: 'active', icon: (
    <svg width="24" height="24" viewBox="0 0 24 24">
      <path d="M11 5h12v13H11z" fill="#fff" stroke="#0a6cbd" strokeWidth="1.300" />
      <path d="m12 6 6 5.500L23 6" fill="none" stroke="#0a6cbd" strokeWidth="1.400" />
      <path d="m1 3 12-3v24L1 21z" fill="#0a6cbd" />
      <ellipse cx="7" cy="12" rx="2.700" ry="3.700" fill="none" stroke="#fff" strokeWidth="2" />
    </svg>
  ) },
  { state: 'running', icon: (
    <svg width="24" height="24" viewBox="0 0 24 24" strokeWidth="3" strokeLinecap="round">
      <circle cx="12" cy="12" r="12" fill="#fff" />
      <path d="M10 5v5M5.500 10H10" stroke="#36c5f0" />
      <path d="M14 5v5M14 10h4.500" stroke="#2eb67d" />
      <path d="M14 14v5M14 14h4.500" stroke="#ecb22e" />
      <path d="M10 14v5M5.500 14H10" stroke="#e01e5a" />
    </svg>
  ) },
  { state: 'running', icon: <ChromeLogo /> },
  { state: 'running', icon: (
    <svg width="22" height="24" viewBox="0 0 22 24">
      <path d="M0 0l11 6 11-6v18l-11 6-11-6z" fill="#c01818" />
      <path d="m4.500 7 6.500 4 6.500-4v9L11 19.500 4.500 16z" fill="#f2dfdb" />
    </svg>
  ) },
  { state: 'running', icon: <ChromeLogo badge /> },
];

function Taskbar() {
  return (
    <div className="flex h-12 items-center border-t border-[#cbbdbc] bg-[linear-gradient(90deg,#f3dfd9_0%,#f5e3e0_20%,#f3e0da_32%,#e3d8d3_48%,#efdfd9_60%,#f3dfdc_75%,#f5e4dd_100%)] pb-px">
      <div className="flex w-[397px] items-center pl-[18px] text-[11.500px] leading-4">
        <div className="flex w-[33px] items-start">
          <svg width="30" height="34" viewBox="0 0 30 34">
            <path d="M6 27q-5 0-5-4.500T6 18q1-7 7-7 7 0 8 7 4 .5 4 4.500t-4 4.500z" fill="#a9c7f5" />
            <path d="M6 27q-5 0-5-4.500t6-3.500 5 4h12q-1 4-5 4z" fill="#83aef0" />
            <circle cx="20" cy="8" r="8" fill="#c42b1c" />
            <text x="20" y="12" fontSize="11" textAnchor="middle" fill="#fff" fontFamily="Open Sans">2</text>
          </svg>
        </div>
        <div className="flex flex-col items-start">
          <Fit w={24} className="text-[#1f1f1f]">17°C</Fit>
          <Fit w={38} className="text-[#5d5a59]">Cloudy</Fit>
        </div>
      </div>
      <svg width="24" height="24" viewBox="0 0 24 24">
        <defs><linearGradient id="win" x1="0" y1="0" x2="1" y2="1"><stop offset="0" stopColor="#4fd0ff" /><stop offset="1" stopColor="#0078d4" /></linearGradient></defs>
        <path d="M0 0h11.500v11.500H0zM12.500 0H24v11.500H12.500zM0 12.500h11.500V24H0zM12.500 12.500H24V24H12.500z" fill="url(#win)" />
      </svg>
      <div className="ml-[12px] flex h-8 w-[218px] items-center rounded-full border border-[#e0d0cc] bg-[#fbf4f2] pl-2.5 text-[13px] text-[#5d5a59]">
        <svg width="16" height="16" viewBox="0 0 16 16" fill="none" stroke="#333" strokeWidth="1.600">
          <circle cx="7" cy="6.500" r="5.500" />
          <path d="m11 10.500 4 4.500" />
        </svg>
        <Fit w={41} className="ml-[9px]">Search</Fit>
        <svg width="46" height="26" viewBox="0 0 46 26" className="ml-auto mr-1">
          <path d="M1 22q6-5 10-3 10-4 18 0 8-4 14 1 3 3-2 4-18 3-38 0z" fill="#5fae45" />
          <path d="m9 21 5-15 6 1 2 15zM20 7l8-1 7 15-8 2z" fill="#9a8063" />
          <path d="m14 20 4-12 3 14zM24 9l6 12h-3z" fill="#d3bb98" />
          <path d="M9 4q4-4 10-2l11 4 3 3-5 1-18-4z" fill="#8b755d" />
          <path d="M11 3q4-2 8 0l9 3-8 1z" fill="#cbb392" />
          <path d="M2 23q18 4 38 0" stroke="#27824f" strokeWidth="2" fill="none" />
        </svg>
      </div>
      <div className="ml-[3px] flex">
        {apps.map((app, i) => (
          <div key={i} className="flex h-[47px] w-11 items-center justify-center">
            <div className={`relative flex h-[39px] w-[39px] items-center justify-center rounded ${app.state === 'active' ? 'bg-[#f9f0ee] shadow-[0_0_1px_rgba(0,0,0,0.25)]' : ''}`}>
              {app.icon}
              {app.state === 'running' ? <div className="absolute bottom-0 left-4 h-[3px] w-1.5 rounded-full bg-[#8a8381]" /> : null}
              {app.state === 'active' ? <div className="absolute bottom-0 left-[11px] h-[3px] w-4 rounded-full bg-[#0078d4]" /> : null}
            </div>
          </div>
        ))}
      </div>
      <div className="ml-auto flex items-center text-[11.500px] text-[#1f1f1f]">
        <svg width="54" height="24" viewBox="0 0 54 24" fill="none" stroke="#222" strokeWidth="1.400">
          <path d="m5 14 5-5 5 5" />
          <path d="M34 10q2-5 8-5 5 0 7 5M49.500 5v4.500H45M35 19v-5h5M35 15q3 4 6 4" />
          <circle cx="46" cy="16" r="4" fill="#ff9800" stroke="none" />
        </svg>
        <Fit w={24} className="ml-3.5 text-[#444]">ENG</Fit>
        <svg width="66" height="20" viewBox="0 0 66 20" className="ml-[17px]" fill="none" stroke="#222" strokeWidth="1.200">
          <path d="M1.500 8q7.500-7 15 0M4 11q5-5 10 0M6.500 13.500q2.500-2.500 5 0" />
          <circle cx="9" cy="15" r="1.200" fill="#222" />
          <path d="M25.500 8h2.500l4-3.500v11L28 12h-2.500zM34.500 7.500q2 2.500 0 5M37 5.500q3 4.500 0 9M39.500 3.500q4.500 6.500 0 13" />
          <rect x="49.500" y="5.500" width="13" height="9" rx="2" />
          <path d="M51 7h6v6h-6zM64 8v4" fill="#222" />
        </svg>
        <div className="ml-4 flex w-[54px] flex-col items-end leading-4">
          <Fit w={29}>10:14</Fit>
          <Fit w={54}>14.3.2025.</Fit>
        </div>
        <svg width="16" height="16" viewBox="0 0 16 16" className="ml-2 mr-[19px]">
          <path d="M2 12V6q0-5 5-5h2v4h4v7l1 1H0zM5 14h4q-2 2.500-4 0z" fill="#111" />
          <path d="M5 5h3.500L5 9.500h4" fill="none" stroke="#f5e4dd" />
          <path d="M10 1h3.500L10 5h4" fill="none" stroke="#111" strokeWidth="1.200" />
        </svg>
      </div>
    </div>
  );
}

export default function App() {
  return (
    <div className="relative flex h-[1080px] w-[1920px] flex-col overflow-hidden bg-white font-['Open_Sans','Noto_Sans',sans-serif]">
      <TabStrip />
      <Toolbar />
      <InfoBars />
      <WebPage />
      <Taskbar />
      <div className="absolute left-0 top-[1011px] flex h-[21px] w-[358px] items-center rounded-tr bg-[#d3e3fd] pl-[5px] text-[11.500px] text-[#474747]">
        <Fit w={347}>mailto:support@fortrade.com?subject=Client information request</Fit>
      </div>
      <OutlookWindow />
    </div>
  );
}
